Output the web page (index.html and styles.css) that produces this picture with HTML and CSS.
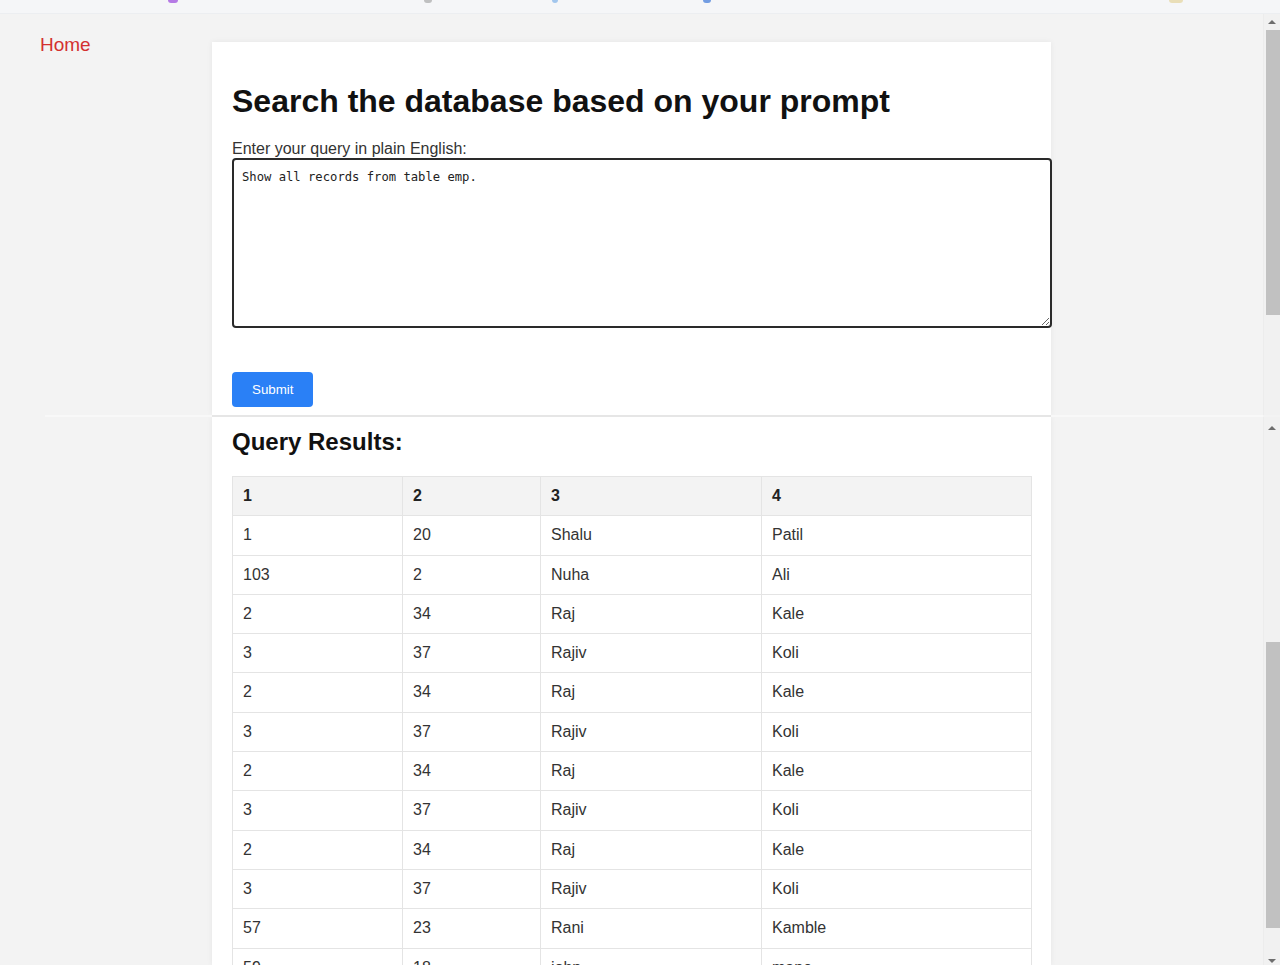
FILE: index.html
```html
<!DOCTYPE html>
<html lang="en">
<head>
<meta charset="utf-8">
<title>Search the database</title>
<link rel="stylesheet" href="styles.css">
</head>
<body>
<div class="strip">
  <span class="dot dot-purple"></span>
  <span class="dot dot-gray"></span>
  <span class="dot dot-blue"></span>
  <span class="dot dot-blue2"></span>
  <span class="dot dot-tan"></span>
</div>

<div class="pane pane-top">
  <nav class="side">
    <a class="home" href="#">Home</a>
  </nav>
  <main class="card card-top">
    <h1 class="title">Search the database based on your prompt</h1>
    <form class="query-form">
      <label class="label" for="q">Enter your query in plain English:</label>
      <textarea id="q" class="query">Show all records from table emp.</textarea>
      <button type="button" class="submit">Submit</button>
    </form>
  </main>
  <div class="fill"></div>
  <div class="scrollbar">
    <div class="arrow arrow-up"></div>
    <div class="thumb thumb-top"></div>
  </div>
</div>

<div class="seam"></div>

<div class="pane pane-bottom">
  <div class="side"></div>
  <section class="card card-bottom">
    <h2 class="results-title">Query Results:</h2>
    <table class="results">
      <thead>
        <tr><th class="c1">1</th><th class="c2">2</th><th class="c3">3</th><th class="c4">4</th></tr>
      </thead>
      <tbody>
        <tr><td>1</td><td>20</td><td>Shalu</td><td>Patil</td></tr>
        <tr><td>103</td><td>2</td><td>Nuha</td><td>Ali</td></tr>
        <tr><td>2</td><td>34</td><td>Raj</td><td>Kale</td></tr>
        <tr><td>3</td><td>37</td><td>Rajiv</td><td>Koli</td></tr>
        <tr><td>2</td><td>34</td><td>Raj</td><td>Kale</td></tr>
        <tr><td>3</td><td>37</td><td>Rajiv</td><td>Koli</td></tr>
        <tr><td>2</td><td>34</td><td>Raj</td><td>Kale</td></tr>
        <tr><td>3</td><td>37</td><td>Rajiv</td><td>Koli</td></tr>
        <tr><td>2</td><td>34</td><td>Raj</td><td>Kale</td></tr>
        <tr><td>3</td><td>37</td><td>Rajiv</td><td>Koli</td></tr>
        <tr><td>57</td><td>23</td><td>Rani</td><td>Kamble</td></tr>
        <tr><td>59</td><td>18</td><td>john</td><td>mane</td></tr>
      </tbody>
    </table>
  </section>
  <div class="fill"></div>
  <div class="scrollbar">
    <div class="arrow arrow-up arrow-up2"></div>
    <div class="thumb thumb-bottom"></div>
    <div class="arrow arrow-down"></div>
  </div>
</div>
</body>
</html>
```

FILE: styles.css
```css
* { box-sizing: border-box; }

html, body {
  margin: 0;
  height: 965px;
  overflow: hidden;
}

body {
  background: #f3f3f3;
  font-family: "Liberation Sans", Arial, sans-serif;
  color: #222;
}

/* browser strip */
.strip {
  height: 14px;
  background: #f5f6f8;
  border-bottom: 1px solid #eceef1;
  display: flex;
  align-items: flex-start;
}
.dot {
  display: block;
  height: 3px;
  border-radius: 0 0 4px 4px;
  opacity: 0.8;
}
.dot-purple { width: 10px; margin-left: 168px; background: #a55be0; }
.dot-gray { width: 8px; margin-left: 246px; background: #8a8a8a; opacity: 0.5; }
.dot-blue { width: 6px; margin-left: 120px; background: #6aa6e6; opacity: 0.6; }
.dot-blue2 { width: 8px; margin-left: 145px; background: #3c78d8; opacity: 0.7; }
.dot-tan { width: 14px; margin-left: 458px; background: #e6d8a8; }

/* panes */
.pane {
  display: flex;
  overflow: hidden;
}
.pane-top { height: 401px; }
.pane-bottom { height: 548px; }

.side {
  width: 212px;
  flex: none;
  padding: 20px 0 0 40px;
}
.home {
  font-size: 19px;
  color: #d3302f;
  text-decoration: none;
}

.fill { flex: 1; }

.card {
  width: 839px;
  flex: none;
  background: #fff;
  box-shadow: 0 0 6px rgba(0, 0, 0, 0.06);
  padding: 0 20px;
}
.card-top {
  margin-top: 28px;
  padding-top: 20px;
}
.card-bottom {
  padding-top: 11px;
}

.title {
  font-size: 32px;
  font-weight: bold;
  color: #111;
  margin: 21px 0 20px;
}

.query-form { display: block; }

.label {
  display: block;
  font-size: 16px;
  color: #333;
}

.query {
  display: block;
  width: 820px;
  height: 170px;
  border: 2px solid #2a2a2a;
  border-radius: 4px;
  padding: 10px 8px 8px;
  font-family: "DejaVu Sans Mono", "Liberation Mono", monospace;
  font-size: 12.2px;
  color: #222;
  background: #fff;
  margin: 0 0 44px;
  resize: vertical;
}

.submit {
  display: block;
  background: #2a80f6;
  color: #fff;
  border: none;
  border-radius: 4px;
  padding: 10px 20px;
  font-family: "Liberation Sans", Arial, sans-serif;
  font-size: 13.33px;
  line-height: 15px;
  height: 35px;
}

.seam {
  height: 2px;
  margin: 0 17px 0 45px;
  background: linear-gradient(to right,
    #f8f8f8 0, #f8f8f8 167px,
    #e6e6e6 167px, #e6e6e6 1006px,
    #f8f8f8 1006px);
}

.results-title {
  font-size: 24px;
  font-weight: bold;
  color: #111;
  margin: 0 0 20px;
}

.results {
  width: 799px;
  border-collapse: collapse;
  table-layout: fixed;
  font-size: 16px;
}
.results th,
.results td {
  border: 1px solid #e4e4e4;
  padding: 10px;
  text-align: left;
  line-height: 18.3px;
}
.results th {
  background: #f3f3f3;
  font-weight: bold;
  color: #222;
}
.results td { color: #333; }
.c1 { width: 170px; }
.c2 { width: 138px; }
.c3 { width: 221px; }
.c4 { width: 270px; }

/* scrollbars */
.scrollbar {
  width: 17px;
  flex: none;
  background: #f1f1f1;
  border-left: 1px solid #ececec;
  display: flex;
  flex-direction: column;
  align-items: center;
}
.arrow {
  width: 0;
  height: 0;
  border-left: 4px solid transparent;
  border-right: 4px solid transparent;
}
.arrow-up {
  border-bottom: 4px solid #6e6e6e;
  margin: 6px 0 6px;
}
.arrow-up2 { margin-top: 9px; }
.arrow-down {
  border-top: 4px solid #6e6e6e;
  margin-top: 31px;
}
.thumb {
  width: 14px;
  background: #c1c1c1;
  margin-left: 1px;
}
.thumb-top {
  height: 285px;
  margin-top: 0;
}
.thumb-bottom {
  height: 286px;
  margin-top: 206px;
}
```
